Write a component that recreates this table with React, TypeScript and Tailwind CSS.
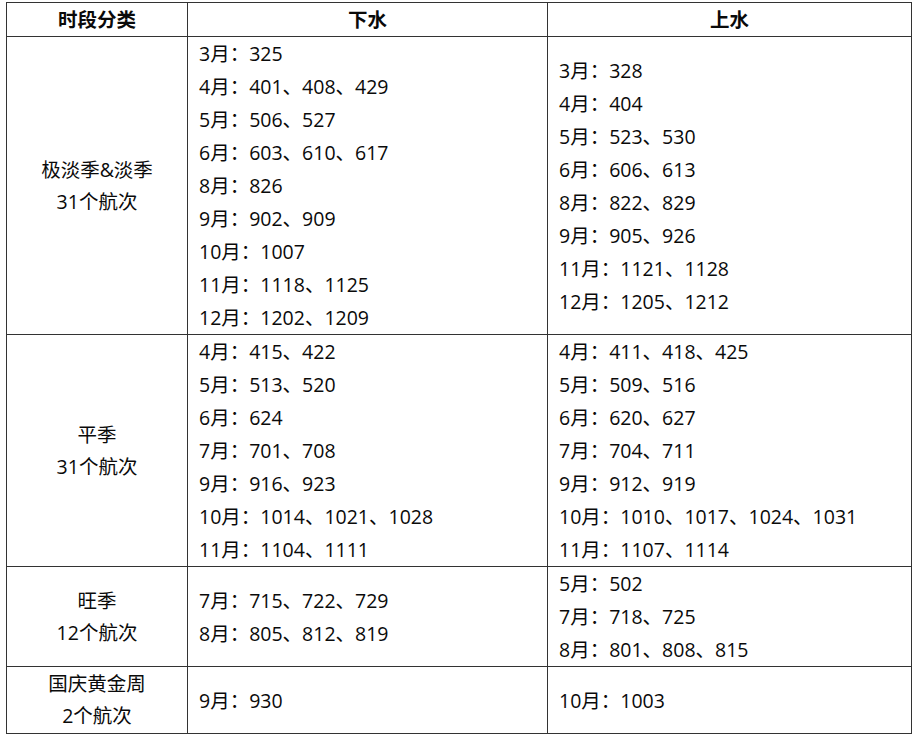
import React from 'react';

interface IRow {
  name: string;
  count: string;
  down: string[];
  up: string[];
  height: string;
}

const rows: IRow[] = [
  {
    name: '极淡季&淡季',
    count: '31个航次',
    height: 'h-[298px]',
    down: [
      '3月：325',
      '4月：401、408、429',
      '5月：506、527',
      '6月：603、610、617',
      '8月：826',
      '9月：902、909',
      '10月：1007',
      '11月：1118、1125',
      '12月：1202、1209',
    ],
    up: [
      '3月：328',
      '4月：404',
      '5月：523、530',
      '6月：606、613',
      '8月：822、829',
      '9月：905、926',
      '11月：1121、1128',
      '12月：1205、1212',
    ],
  },
  {
    name: '平季',
    count: '31个航次',
    height: 'h-[232px]',
    down: [
      '4月：415、422',
      '5月：513、520',
      '6月：624',
      '7月：701、708',
      '9月：916、923',
      '10月：1014、1021、1028',
      '11月：1104、1111',
    ],
    up: [
      '4月：411、418、425',
      '5月：509、516',
      '6月：620、627',
      '7月：704、711',
      '9月：912、919',
      '10月：1010、1017、1024、1031',
      '11月：1107、1114',
    ],
  },
  {
    name: '旺季',
    count: '12个航次',
    height: 'h-[99px]',
    down: ['7月：715、722、729', '8月：805、812、819'],
    up: ['5月：502', '7月：718、725', '8月：801、808、815'],
  },
  {
    name: '国庆黄金周',
    count: '2个航次',
    height: 'h-[67px]',
    down: ['9月：930'],
    up: ['10月：1003'],
  },
];

const Lines = ({ items }: { items: string[] }) => (
  <div className="flex flex-col">
    {items.map((t) => (
      <div key={t} className="leading-[33px] whitespace-nowrap">
        {t}
      </div>
    ))}
  </div>
);

const App = () => {
  return (
    <div
      className="bg-white w-[918px] h-[737px] pt-[2px] pl-[6px] text-[19.5px] text-[#0a0a0a]"
      style={{ fontFamily: '"Open Sans", "Noto Sans CJK SC", sans-serif' }}
    >
      <table className="border-collapse table-fixed w-[905px]">
        <colgroup>
          <col className="w-[181px]" />
          <col className="w-[360px]" />
          <col className="w-[364px]" />
        </colgroup>
        <thead>
          <tr className="h-[34px]">
            <th className="border border-[#333] font-bold text-center leading-[33px] p-0">时段分类</th>
            <th className="border border-[#333] font-bold text-center leading-[33px] p-0">下水</th>
            <th className="border border-[#333] font-bold text-center leading-[33px] p-0">上水</th>
          </tr>
        </thead>
        <tbody>
          {rows.map((r) => (
            <tr key={r.name} className={r.height}>
              <td className="border border-[#333] text-center align-middle p-0">
                <div className="leading-[32px]">{r.name}</div>
                <div className="leading-[32px]">{r.count}</div>
              </td>
              <td className="border border-[#333] align-middle pl-[11px] p-0">
                <Lines items={r.down} />
              </td>
              <td className="border border-[#333] align-middle pl-[11px] p-0">
                <Lines items={r.up} />
              </td>
            </tr>
          ))}
        </tbody>
      </table>
    </div>
  );
};

export default App;
